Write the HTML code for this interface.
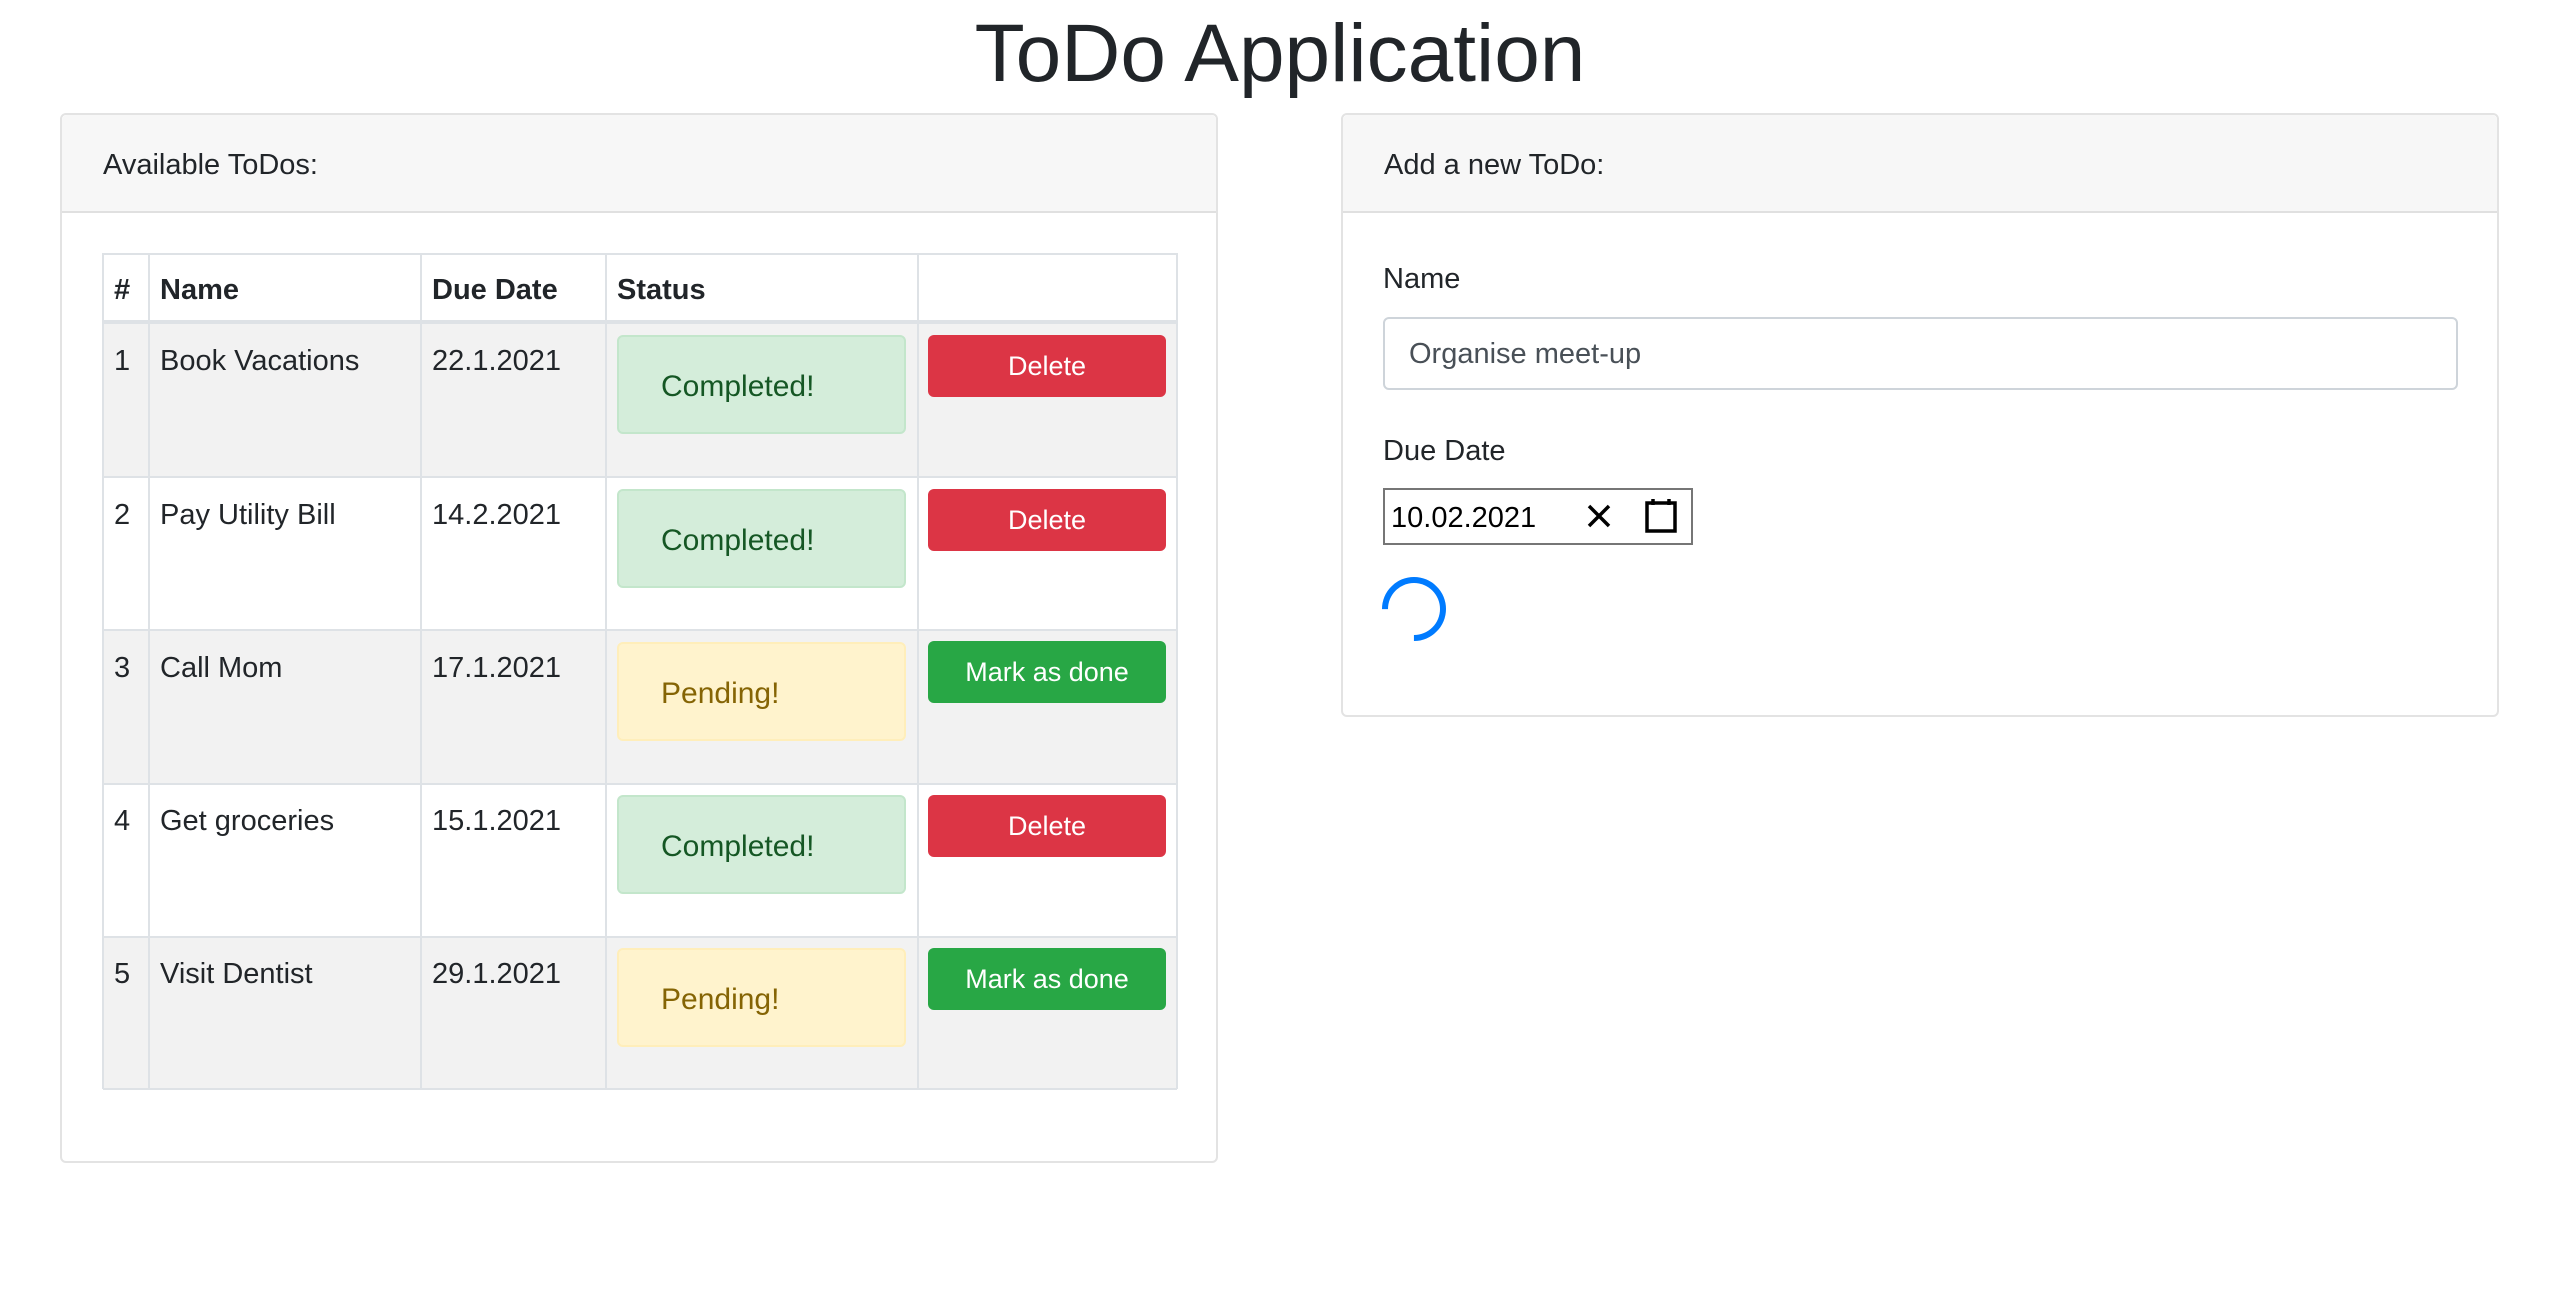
<!DOCTYPE html>
<html><head><meta charset="utf-8">
<style>
*{box-sizing:border-box;margin:0;padding:0}
body{width:2560px;height:1316px;background:#fff;font-family:"Liberation Sans",sans-serif;color:#212529;position:relative;overflow:hidden}
.abs{position:absolute}
h1{position:absolute;left:0;width:2560px;top:6px;text-align:center;font-weight:400;font-size:82px;line-height:96px;color:#212529}
.card{position:absolute;border:2px solid #e3e3e3;border-radius:6px;background:#fff}
.ch{position:absolute;left:0;right:0;top:0;height:98px;background:#f7f7f7;border-bottom:2px solid #e0e0e0;border-radius:5px 5px 0 0;font-size:29px;line-height:100px;padding-left:41px}
.t{position:absolute;font-size:29px;line-height:30px;white-space:nowrap}
.row{position:absolute;left:103px;width:1074px}
.vl{position:absolute;top:253px;height:836px;width:2px;background:#dee2e6}
.hl{position:absolute;left:103px;width:1074px;height:2px;background:#dee2e6}
.al{position:absolute;left:617px;width:289px;height:99px;border-radius:6px;font-size:30px;line-height:100px;padding-left:42px}
.ok{background:#d4edda;border:2px solid #c3e6cb;color:#155724}
.pe{background:#fff3cd;border:2px solid #ffeeba;color:#856404}
.btn{position:absolute;left:928px;width:238px;height:62px;border-radius:6px;color:#fff;font-size:27px;line-height:62px;text-align:center}
.del{background:#dc3545}.don{background:#28a745}
</style></head><body>
<h1>ToDo Application</h1>

<div class="card" style="left:60px;top:113px;width:1158px;height:1050px">
<div class="ch">Available ToDos:</div>
</div>

<div class="row" style="top:322px;height:155px;background:#f2f2f2"></div>
<div class="row" style="top:630px;height:154px;background:#f2f2f2"></div>
<div class="row" style="top:937px;height:152px;background:#f2f2f2"></div>

<div class="hl" style="top:253px"></div>
<div class="hl" style="top:320px;height:4px"></div>
<div class="hl" style="top:476px"></div>
<div class="hl" style="top:629px"></div>
<div class="hl" style="top:783px"></div>
<div class="hl" style="top:936px"></div>
<div class="hl" style="top:1088px"></div>
<div class="vl" style="left:102px"></div>
<div class="vl" style="left:148px"></div>
<div class="vl" style="left:420px"></div>
<div class="vl" style="left:605px"></div>
<div class="vl" style="left:917px"></div>
<div class="vl" style="left:1176px"></div>

<div class="t" style="left:114px;top:275px;font-weight:bold">#</div>
<div class="t" style="left:160px;top:275px;font-weight:bold">Name</div>
<div class="t" style="left:432px;top:275px;font-weight:bold">Due Date</div>
<div class="t" style="left:617px;top:275px;font-weight:bold">Status</div>

<div class="t" style="left:114px;top:346px">1</div>
<div class="t" style="left:160px;top:346px">Book Vacations</div>
<div class="t" style="left:432px;top:346px">22.1.2021</div>
<div class="al ok" style="top:335px">Completed!</div>
<div class="btn del" style="top:335px">Delete</div>

<div class="t" style="left:114px;top:500px">2</div>
<div class="t" style="left:160px;top:500px">Pay Utility Bill</div>
<div class="t" style="left:432px;top:500px">14.2.2021</div>
<div class="al ok" style="top:489px">Completed!</div>
<div class="btn del" style="top:489px">Delete</div>

<div class="t" style="left:114px;top:653px">3</div>
<div class="t" style="left:160px;top:653px">Call Mom</div>
<div class="t" style="left:432px;top:653px">17.1.2021</div>
<div class="al pe" style="top:642px">Pending!</div>
<div class="btn don" style="top:641px">Mark as done</div>

<div class="t" style="left:114px;top:806px">4</div>
<div class="t" style="left:160px;top:806px">Get groceries</div>
<div class="t" style="left:432px;top:806px">15.1.2021</div>
<div class="al ok" style="top:795px">Completed!</div>
<div class="btn del" style="top:795px">Delete</div>

<div class="t" style="left:114px;top:959px">5</div>
<div class="t" style="left:160px;top:959px">Visit Dentist</div>
<div class="t" style="left:432px;top:959px">29.1.2021</div>
<div class="al pe" style="top:948px">Pending!</div>
<div class="btn don" style="top:948px">Mark as done</div>

<div class="card" style="left:1341px;top:113px;width:1158px;height:604px">
<div class="ch">Add a new ToDo:</div>
</div>
<div class="t" style="left:1383px;top:264px">Name</div>
<div class="abs" style="left:1383px;top:317px;width:1075px;height:73px;border:2px solid #ced4da;border-radius:6px;font-size:29px;line-height:71px;padding-left:24px;color:#495057">Organise meet-up</div>
<div class="t" style="left:1383px;top:436px">Due Date</div>
<div class="abs" style="left:1383px;top:488px;width:310px;height:57px;border:2px solid #767676;background:#fff"></div>
<div class="t" style="left:1391px;top:503px;color:#000">10.02.2021</div>
<svg class="abs" style="left:1586px;top:503px" width="26" height="26" viewBox="0 0 26 26"><path d="M3 3L23 23M23 3L3 23" stroke="#000" stroke-width="3.5"/></svg>
<svg class="abs" style="left:1644px;top:497px" width="34" height="36" viewBox="0 0 34 36"><rect x="3" y="6" width="28" height="28" fill="none" stroke="#000" stroke-width="3.5"/><path d="M9 2V8M25 2V8" stroke="#000" stroke-width="3.5"/></svg>
<div class="abs" style="left:1382px;top:577px;width:64px;height:64px;border:6px solid #007bff;border-left-color:transparent;border-radius:50%;transform:rotate(-45deg)"></div>
</body></html>
